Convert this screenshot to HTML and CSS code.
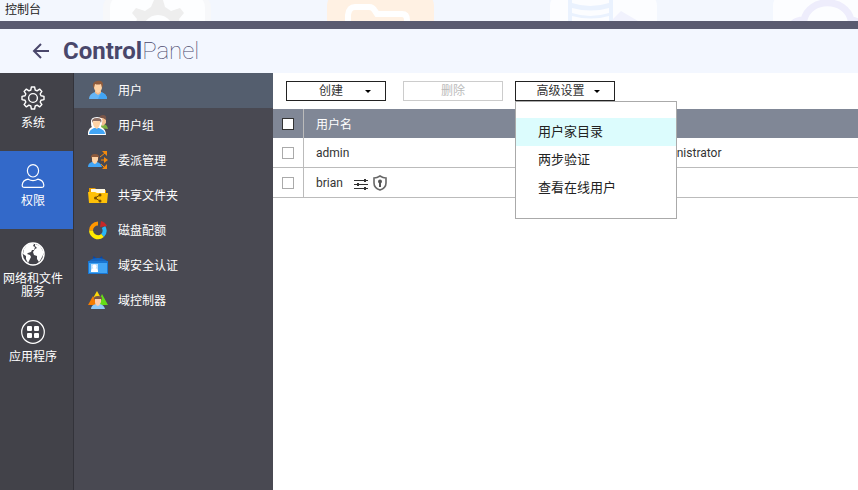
FILE: index.html
```html
<!DOCTYPE html>
<html lang="zh-CN">
<head>
    <meta charset="UTF-8">
    <meta name="viewport" content="width=device-width, initial-scale=1">
    <title>控制台</title>
    <link rel="stylesheet" href="styles.css">
</head>
<body>
    <div class="window-bar">
        <svg class="wallpaper" width="858" height="21" viewBox="0 0 858 21" aria-hidden="true">
            <rect x="103" y="-8" width="108" height="60" rx="16" fill="#f7f8fa"/>
            <rect x="110" y="-8" width="95" height="60" rx="16" fill="#fdfeff"/>
            <path d="M154 0h9l2 7 6 4 9-3 4 5-5 6 1 3h-9q-5-7-13-7t-13 7h-9l1-3-5-6 4-5 9 3 6-4z" fill="#eeeeee"/>
            <rect x="327" y="-8" width="107" height="60" rx="14" fill="#fff1e3"/>
            <path d="M348 30V15q1-8 7-8h14q4 0 6 4l2 3h25q5 0 5 6v11" fill="none" stroke="#ffffff" stroke-width="6"/>
            <rect x="550" y="-8" width="107" height="60" rx="14" fill="#fcfdff"/>
            <path d="M568 0h4v21h-4zM609 0h4v21h-4z" fill="#eaf2fe"/>
            <path d="M572 3q18 6 37 0v5q-18 5-37 0zM572 13q18 6 37 0v3q-18 5-37 0z" fill="#eaf2fe"/>
            <path d="M613 19l8-8 17 10h-25z" fill="#f1f2fd"/>
            <rect x="773" y="-8" width="107" height="60" rx="14" fill="#fcfdff"/>
            <path d="M793 24q3-4 11-4C809-3 846-3 851 20q5 0 9 4" fill="none" stroke="#eeedfc" stroke-width="7"/>
        </svg>
        <span class="window-title">控制台</span>
    </div>

    <header class="header">
        <a class="back" href="#" aria-label="返回">
            <svg width="18" height="18" viewBox="0 0 18 18"><path d="M17 9H2M9 2L2 9l7 7" fill="none" stroke="#49476b" stroke-width="2"/></svg>
        </a>
        <h1><b>Control</b>Panel</h1>
    </header>

    <div class="layout">
        <nav class="rail">
            <a href="#" class="rail-item">
                <svg width="24" height="24" viewBox="0 0 24 24" fill="none" stroke="#fff" stroke-width="1.4" stroke-linejoin="round">
                    <path d="M10.4 1h3.200l.6 3 1.900.8 2.500-1.700 2.300 2.300-1.700 2.500.8 1.900 3 .6v3.200l-3 .6-.8 1.900 1.700 2.500-2.300 2.300-2.500-1.700-1.900.8-.6 3h-3.200l-.6-3-1.900-.8-2.500 1.700-2.300-2.300 1.700-2.500-.8-1.900-3-.6v-3.200l3-.6.8-1.900-1.700-2.500 2.300-2.300 2.500 1.700 1.900-.8z"/>
                    <circle cx="12" cy="12" r="4.4"/>
                </svg>
                <span>系统</span>
            </a>
            <a href="#" class="rail-item active">
                <svg width="24" height="24" viewBox="0 0 24 24" fill="none" stroke="#fff" stroke-width="1.2">
                    <ellipse cx="12" cy="6.8" rx="5.6" ry="6.2"/>
                    <path d="M3.500 23.400Q1 23.400 1.200 21q.5-4.800 6-5.800 4.800 2.800 9.600 0 5.500 1 6 5.800.2 2.400-2.300 2.400z"/>
                </svg>
                <span>权限</span>
            </a>
            <a href="#" class="rail-item">
                <svg width="24" height="24" viewBox="0 0 24 24">
                    <circle cx="12" cy="12" r="11" fill="none" stroke="#fff" stroke-width="1.5"/>
                    <path d="M3 7l3-4 5-2 2 1-1 2 2 1-1 3-2 0-1 2-3 1-1 1 3 1 1 2-2 4-1 2-2-4v-3l-3-2z" fill="#fff"/>
                    <path d="M14 2l5 2 3 5v4l-2 4-2 3-2-3 0-3-3-1-1-3 2-3 2-1-2-2z" fill="#fff"/>
                </svg>
                <span>网络和文件<br>服务</span>
            </a>
            <a href="#" class="rail-item">
                <svg width="24" height="24" viewBox="0 0 24 24">
                    <circle cx="12" cy="12" r="11.300" fill="none" stroke="#fff" stroke-width="1.2"/>
                    <g fill="#fff">
                        <rect x="6" y="6" width="5" height="5" rx="1"/><rect x="13" y="6" width="5" height="5" rx="1"/>
                        <rect x="6" y="13" width="5" height="5" rx="1"/><rect x="13" y="13" width="5" height="5" rx="1"/>
                    </g>
                </svg>
                <span>应用程序</span>
            </a>
        </nav>

        <nav class="subnav">
            <a href="#" class="subnav-item active">
                <svg width="20" height="20" viewBox="0 0 20 20">
                    <path d="M1 19q0-5 6-7h6q6 2 6 7z" fill="#64b5f6"/><path d="M10 19l3-7q6 2 6 7z" fill="#42a5f5"/>
                    <path d="M7 11h6v2l-3 2-3-2z" fill="#efb98a"/><path d="M6 5q0-3 4-3t4 3v3q-1 4-4 5-3-1-4-5z" fill="#ffd3a5"/>
                    <path d="M5 7q-1-5 4-6 6-1 6 4l-1 3-1-4q-3 1-6 0L6 8z" fill="#8d5a3c"/>
                </svg>
                <span>用户</span>
            </a>
            <a href="#" class="subnav-item">
                <svg width="20" height="20" viewBox="0 0 20 20">
                    <path d="M11 13q1-4 4-4 4 0 5 5z" fill="#7cb342"/><path d="M12 3h6v5l-3 3-3-2z" fill="#f2bd91"/>
                    <path d="M11 3q1-3 4-3 4 0 3 5l-3-2z" fill="#795548"/>
                    <path d="M0 20v-3q1-4 4-5-1-1-1-4-1-6 6-6t5 6l-1 4q5 2 5 8z" fill="#fff"/>
                    <path d="M1 19q0-4 5-6h5q6 2 6 6z" fill="#42a5f5"/><path d="M5 6q4 1 7-1v4q-1 4-3 5-3-1-4-5z" fill="#ffd3a5"/>
                    <path d="M4 8q-1-5 5-5t4 5l-1-2H5z" fill="#8d6e63"/>
                </svg>
                <span>用户组</span>
            </a>
            <a href="#" class="subnav-item">
                <svg width="20" height="20" viewBox="0 0 20 20">
                    <path d="M0 17q0-4 4-5h5q4 1 5 5z" fill="#42a5f5"/><path d="M4 7h6v3q-1 3-3 4-3-1-3-4z" fill="#ffd3a5"/>
                    <path d="M3 9q-1-5 4-5t4 5l-1-2H4z" fill="#8d5a3c"/>
                    <path d="M12 7l5-4M13 10h5M13 14l4 4" stroke="#f58a0b"/>
                    <path d="M14 1h5v5zM16 7l4 3-4 3zM19 14v5h-5z" fill="#f58a0b"/>
                </svg>
                <span>委派管理</span>
            </a>
            <a href="#" class="subnav-item">
                <svg width="20" height="20" viewBox="0 0 20 20">
                    <path d="M1 3h6l2 2h9v4H1z" fill="#e69b00"/><path d="M3 4h14v4H3z" fill="#fff8e1"/>
                    <path d="M0 7h7l2 1h11l-1 10H1z" fill="#ffc107"/>
                    <path d="M12 10l-5 3 5 3" fill="none" stroke="#795000"/><circle cx="12" cy="10" r="1.500" fill="#795000"/>
                    <circle cx="7.500" cy="13" r="1.500" fill="#795000"/><circle cx="12" cy="16" r="1.500" fill="#795000"/>
                </svg>
                <span>共享文件夹</span>
            </a>
            <a href="#" class="subnav-item">
                <svg width="20" height="20" viewBox="0 0 20 20" fill="none" stroke-width="4">
                    <path d="M3 10.500A7 7 0 0 1 10 3.500" stroke="#ff9800"/>
                    <path d="M15.500 7A7 7 0 0 1 14.500 15.500" stroke="#29b6f6"/>
                    <path d="M14.500 15.500A7 7 0 0 1 3 10.500" stroke="#ffeb00"/>
                    <path d="M12 7l1-6q4 1 6 5z" fill="#c62828"/>
                </svg>
                <span>磁盘配额</span>
            </a>
            <a href="#" class="subnav-item">
                <svg width="20" height="20" viewBox="0 0 20 20">
                    <path d="M5 1l5 3 4-3 1 4H5z" fill="#0d47a1"/><path d="M1 6q3-3 9-3t9 3v2H1z" fill="#1565c0"/>
                    <path d="M0 6h20v13H0z" fill="#1976d2"/><path d="M1 8h18v10H1z" fill="#42a5f5"/>
                    <path d="M3 9h7v8H3z" fill="#bbdefb"/><circle cx="6.500" cy="11.500" r="2" fill="#fff"/><path d="M3 17q0-4 3.500-4t3.500 4z" fill="#fff"/>
                </svg>
                <span>域安全认证</span>
            </a>
            <a href="#" class="subnav-item">
                <svg width="20" height="20" viewBox="0 0 20 20">
                    <path d="M9 1l5 9H4z" fill="#fdd808"/><path d="M5 6l5 9H0z" fill="#f57c00"/><path d="M14 4l6 11H9z" fill="#64dd17"/>
                    <path d="M3 19q0-4 5-5h4q4 1 5 5z" fill="#90caf9"/><path d="M7 8h6v4q-1 3-3 4-3-1-3-4z" fill="#ffccaa"/>
                    <path d="M6 10q-1-4 4-4t4 4l-1-1H7z" fill="#795548"/>
                </svg>
                <span>域控制器</span>
            </a>
        </nav>

        <main class="content">
            <div class="toolbar">
                <button type="button" class="btn btn-create">创建<i class="caret"></i></button>
                <button type="button" class="btn" disabled>删除</button>
                <div class="dropdown">
                    <button type="button" class="btn btn-advanced" aria-expanded="true">高级设置<i class="caret"></i></button>
                    <ul class="menu">
                        <li><a href="#" class="active">用户家目录</a></li>
                        <li><a href="#">两步验证</a></li>
                        <li><a href="#">查看在线用户</a></li>
                    </ul>
                </div>
            </div>

            <table class="users">
                <colgroup>
                    <col class="col-check">
                    <col class="col-name">
                    <col>
                </colgroup>
                <thead>
                    <tr>
                        <th><input type="checkbox" aria-label="全选"></th>
                        <th>用户名</th>
                        <th></th>
                    </tr>
                </thead>
                <tbody>
                    <tr>
                        <td><input type="checkbox" aria-label="admin"></td>
                        <td>admin</td>
                        <td>administrator</td>
                    </tr>
                    <tr>
                        <td><input type="checkbox" aria-label="brian"></td>
                        <td>
                            <div class="user">
                                <span>brian</span>
                                <span class="user-icons">
                                    <svg width="14" height="16" viewBox="0 0 14 16">
                                        <path d="M0 5.500h14M0 9.500h14M0 13.500h14" stroke="#333"/>
                                        <path d="M10 4h2v3h-2zM3 8h2v3H3zM10 12h2v3h-2z" fill="#333"/>
                                    </svg>
                                    <svg width="14" height="16" viewBox="0 0 14 16">
                                        <path d="M7 1q3 2 6 2v5q0 5-6 7-6-2-6-7V3q3 0 6-2z" fill="none" stroke="#666" stroke-width="1.600"/>
                                        <circle cx="7" cy="6.500" r="2" fill="#555"/><path d="M6 7h2v5H6z" fill="#555"/>
                                    </svg>
                                </span>
                            </div>
                        </td>
                        <td></td>
                    </tr>
                </tbody>
            </table>
        </main>
    </div>
</body>
</html>
```

FILE: styles.css
```css
* {
    box-sizing: border-box;
}

body {
    margin: 0;
    min-height: 100vh;
    display: flex;
    flex-direction: column;
    font-family: Roboto, "Noto Sans CJK SC", sans-serif;
    font-size: 12px;
    color: #333;
    background: #fff;
}

a {
    color: inherit;
    text-decoration: none;
}

/* верхняя полоса окна */
.window-bar {
    position: relative;
    height: 29px;
    padding-left: 5px;
    overflow: hidden;
    background: #f3f7fe;
    border-bottom: 8px solid #5a5b70;
}

.wallpaper {
    position: absolute;
    top: 0;
    left: 0;
}

.window-title {
    position: relative;
    line-height: 20px;
    color: #222;
}

.header {
    display: flex;
    align-items: center;
    gap: 13px;
    height: 44px;
    padding-left: 32px;
    background: #f3f7ff;
    color: #49476b;
}

.back,
.back svg {
    display: block;
}

h1 {
    margin: 0;
    font-size: 24px;
    font-weight: 100;
    line-height: 44px;
}

h1 b {
    font-weight: 700;
}

.layout {
    flex: 1;
    display: flex;
}

/* левое меню */
.rail {
    width: 74px;
    flex: none;
    background: #424249;
    border-right: 1px solid #33333a;
}

.rail-item {
    display: flex;
    flex-direction: column;
    align-items: center;
    gap: 7px;
    height: 78px;
    padding: 13px 7px 0 0;
    line-height: 13px;
    text-align: center;
    white-space: nowrap;
    color: #fff;
}

.rail-item.active {
    background: #3369c9;
}

.subnav {
    width: 199px;
    flex: none;
    background: #494952;
}

.subnav-item {
    display: flex;
    align-items: center;
    gap: 10px;
    height: 35px;
    padding: 0 0 2px 14px;
    color: #fff;
}

.subnav-item.active {
    background: #545e6e;
}

.content {
    flex: 1;
    min-width: 0;
}

.toolbar {
    display: flex;
    gap: 17px;
    padding: 8px 13px;
}

.btn {
    display: flex;
    align-items: center;
    justify-content: center;
    width: 100px;
    height: 20px;
    padding: 0;
    border: 1px solid #222;
    background: #fff;
    font: inherit;
    line-height: 18px;
    color: #333;
}

.btn-create {
    gap: 22px;
    padding-left: 18px;
}

.btn-advanced {
    gap: 9px;
    padding-left: 6px;
}

.btn:disabled {
    border-color: #ccc;
    color: #bbb;
}

.caret {
    border: 3px solid transparent;
    border-top-color: #000;
    border-bottom: 0;
}

.dropdown {
    position: relative;
    margin-left: -5px;
}

.menu {
    position: absolute;
    top: 100%;
    left: 0;
    z-index: 1;
    width: 162px;
    margin: 0;
    padding: 16px 0;
    list-style: none;
    background: #fff;
    border: 1px solid #aaa;
    font-size: 13px;
}

.menu a {
    display: block;
    padding-left: 22px;
    line-height: 28px;
    color: #222;
}

.menu a.active,
.menu a:hover {
    background: #dcfcfd;
}

/* таблица пользователей */
.users {
    width: 100%;
    table-layout: fixed;
    border-collapse: separate;
    border-spacing: 0;
}

.col-check {
    width: 31px;
}

.col-name {
    width: 334px;
}

.users th,
.users td {
    height: 30px;
    padding: 0 12px;
    text-align: left;
    font-weight: 400;
    border-bottom: 1px solid #bbb;
}

.users th {
    height: 29px;
    background: #808796;
    color: #fff;
    border-bottom: 0;
}

.users th:first-child,
.users td:first-child {
    padding: 0 0 0 9px;
    border-right: 1px solid #bbb;
}

.users input {
    display: block;
    appearance: none;
    width: 12px;
    height: 12px;
    margin: 0;
    background: #fff;
    border: 1px solid #aaa;
}

.users th input {
    border-color: #333;
}

.user {
    display: flex;
    align-items: center;
    gap: 11px;
}

.user-icons {
    display: flex;
    gap: 5px;
}
```
